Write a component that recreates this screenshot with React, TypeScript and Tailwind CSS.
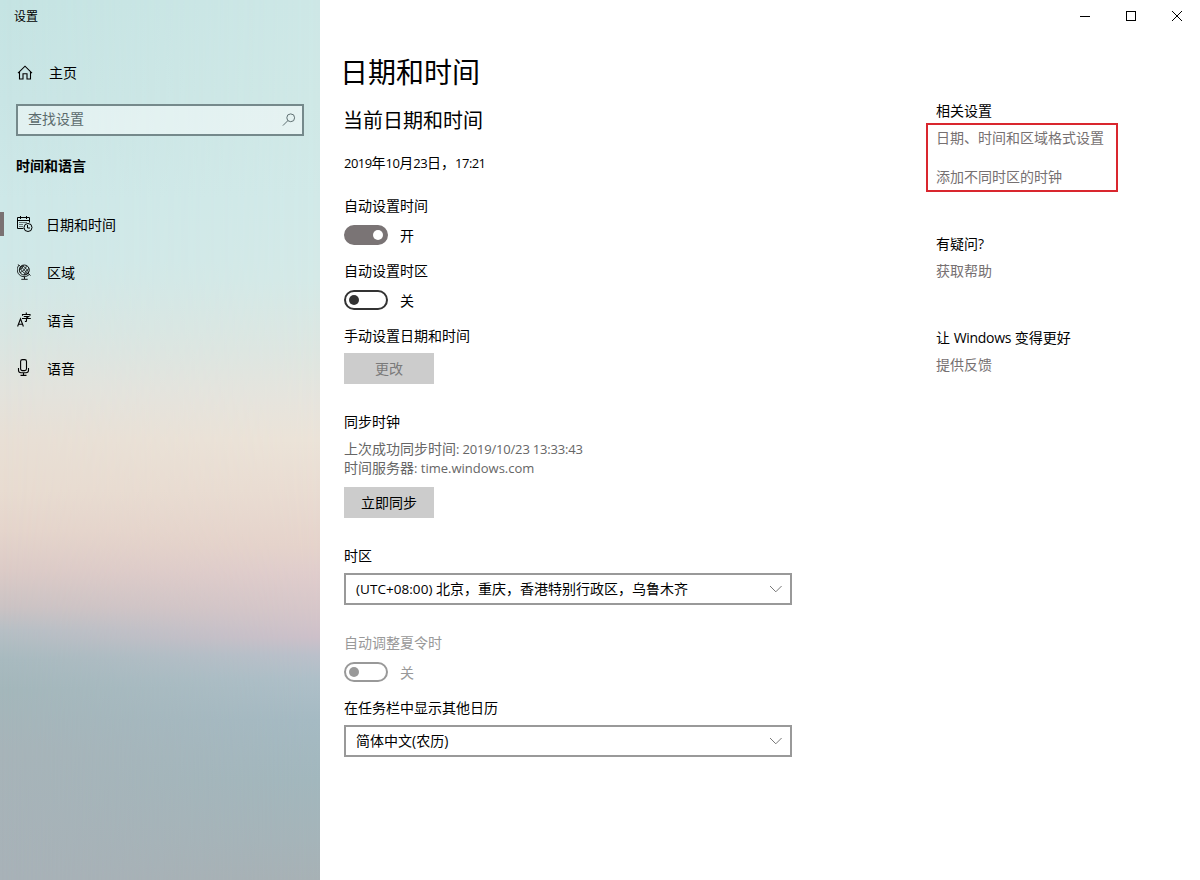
import type { ReactNode } from "react";

const FONT = "font-['Open_Sans','Noto_Sans_CJK_SC',sans-serif]";

function HomeIcon() {
  return (
    <svg width="16" height="16" viewBox="0 0 16 16" fill="none" stroke="#000" strokeWidth="1.1">
      <path d="M1 8.2 8 1.2l7 7M2.5 6.8v7.2h3.5V8.8h4v5.2h3.5V6.8" />
    </svg>
  );
}

function SearchIcon() {
  return (
    <svg width="14" height="14" viewBox="0 0 14 14" fill="none" stroke="#5f7072" strokeWidth="1">
      <circle cx="8.7" cy="4.8" r="3.9" />
      <path d="M5.9 7.6.9 12.6" />
    </svg>
  );
}

function CalendarIcon() {
  return (
    <svg width="16" height="16" viewBox="0 0 16 16" fill="none" stroke="#000" strokeWidth="1">
      <path d="M6.5 12.5h-6v-11h12v5M.5 4.5h12M3.5 0v3M9.5 0v3" />
      <path d="M2.5 6.5h8M2.5 8.5h4M2.5 10.5h3" strokeDasharray="1 1" />
      <circle cx="11" cy="11.5" r="4" />
      <path d="M10.5 9v3h2.5" />
    </svg>
  );
}

function GlobeIcon() {
  return (
    <svg width="16" height="16" viewBox="0 0 16 16" fill="none" stroke="#000" strokeWidth=".9">
      <circle cx="7.3" cy="6" r="5" />
      <g strokeWidth=".75">
        <ellipse cx="7.3" cy="6" rx="2.3" ry="5" transform="rotate(-42 7.3 6)" />
        <path d="M3.9 2.4 10.7 9.6M6.200 1.200c-.4 2.400-1.400 3.700-3.800 4.600M9.600 1.800C8.600 4.800 6.400 7.200 3 8.600M12.100 4.500C9.600 6 8.300 7.400 7.500 11" />
      </g>
      <path d="M2.300 1C-.6 3.700-.4 8 2.300 10.700s7 2.700 9.900-.2M1.200.4l1.800 1.900M11.200 9.400l2.300 2.100M7.500 12.700v2.300M4.300 15.300h6.400" />
    </svg>
  );
}

function LanguageIcon() {
  return (
    <svg width="16" height="16" viewBox="0 0 16 16" fill="none" stroke="#000" strokeWidth="1.1">
      <path d="M.6 14.500 3.500 6.800l2.900 7.700M1.600 12.200h3.800" />
      <path d="M5.500 3.800V2.500h7.500v1.300M9.300.6v1.900M6.800 4.500h4.700L9.500 6v2.800c0 .6-.4.700-1.600.6M5 6.500h8.800" />
    </svg>
  );
}

function MicIcon() {
  return (
    <svg width="16" height="17" viewBox="0 0 16 17" fill="none" stroke="#000" strokeWidth="1.1">
      <rect x="3.6" y=".6" width="5.900" height="11" rx="1.800" />
      <path d="M1.500 9v2.200c0 1.600 1 2.500 2.500 2.500h5c1.500 0 2.500-.9 2.500-2.500V9M6.500 13.700v2.700M3.500 16.400h6" />
    </svg>
  );
}

function Chevron() {
  return (
    <svg width="14" height="8" viewBox="0 0 14 8" fill="none" stroke="#777" strokeWidth="1">
      <path d="M1 1 6.800 6.800 12.600 1" />
    </svg>
  );
}

function NavItem({ icon, label, active = false }: { icon: ReactNode; label: string; active?: boolean }) {
  return (
    <div className="flex h-12 items-center">
      <div className={active ? "h-6 w-1 bg-[#7a7172]" : "h-6 w-1"} />
      <div className="ml-[13px] flex w-[30px] pb-px">{icon}</div>
      <span className={active ? "-ml-px pt-0.5" : "pt-0.5"}>{label}</span>
    </div>
  );
}

function Toggle({ state }: { state: "on" | "off" | "disabled" }) {
  const track = {
    on: "justify-end border-[#7a7475] bg-[#7a7475] pr-[3px]",
    off: "justify-start border-[#333] pl-[3px]",
    disabled: "justify-start border-[#999] pl-[3px]",
  }[state];
  const knob = { on: "bg-white", off: "bg-[#333]", disabled: "bg-[#999]" }[state];
  return (
    <div className="flex h-5 items-center">
      <div className={`flex h-5 w-11 items-center rounded-full border-2 ${track}`}>
        <div className={`size-2.5 rounded-full ${knob}`} />
      </div>
      <span className={`ml-3 pt-0.5 ${state === "disabled" ? "text-[#999]" : ""}`}>{state === "on" ? "开" : "关"}</span>
    </div>
  );
}

function Select({ children }: { children: ReactNode }) {
  return (
    <div className="mt-[7px] flex h-8 w-[448px] items-center justify-between border-2 border-[#999] pr-[7px] pl-2.5">
      <span>{children}</span>
      <Chevron />
    </div>
  );
}

function Digits({ children }: { children: ReactNode }) {
  return <span className="text-[13px] leading-none tracking-[-0.55px]">{children}</span>;
}

export default function App() {
  return (
    <div className={`flex h-[880px] w-[1200px] overflow-hidden bg-white text-sm leading-5 whitespace-nowrap text-black ${FONT}`}>
      <aside className="relative isolate w-80 shrink-0 bg-[linear-gradient(180deg,#c5e4e3_0px,#c9e5e5_100px,#cee8e8_200px,#d0e8e8_260px,#d8e6e3_330px,#e3e3dd_390px,#e8dfd5_440px,#e8dcd1_490px,#e5d5cc_530px,#dccbc7_570px,#cbc3c4_607px,#b7bfc5_630px,#a8babf_660px,#a4b7bb_690px,#a7b4b9_750px,#a8b2b8_880px)]">
        <div className="absolute inset-0 -z-10 bg-[linear-gradient(180deg,#cde7e6_0px,#cfe8e6_100px,#d1e9e8_200px,#d4e9e7_280px,#dde6e1_350px,#e6e4dd_400px,#ebe3d8_440px,#e9dcd2_490px,#e5d3cb_545px,#e0cdcc_572px,#d6c6c9_610px,#cdc0c9_637px,#bbc0ca_655px,#aebfc8_680px,#a5bac3_720px,#a2b7bd_780px,#a5b4b9_840px,#a7b1b5_880px)] [mask-image:linear-gradient(90deg,transparent,black)]" />
        <div className="pt-[7px] pl-3.5 text-xs leading-5">设置</div>
        <div className="mt-9 flex h-5 items-center pl-[17px]">
          <HomeIcon />
          <span className="ml-4">主页</span>
        </div>
        <div className="mt-[21px] ml-4 flex h-8 w-72 items-center justify-between border-2 border-[#75898b] bg-white/45 pr-1.5 pl-2.5">
          <span className="pb-0.5 text-[#5b6b6d]">查找设置</span>
          <SearchIcon />
        </div>
        <div className="mt-5 pl-4 font-bold">时间和语言</div>
        <nav className="mt-6">
          <NavItem active icon={<CalendarIcon />} label="日期和时间" />
          <NavItem icon={<GlobeIcon />} label="区域" />
          <NavItem icon={<LanguageIcon />} label="语言" />
          <NavItem icon={<MicIcon />} label="语音" />
        </nav>
      </aside>

      <main className="w-[606px] shrink-0 pt-[54px] pl-6">
        <h1 className="-ml-1 text-[28px] leading-9">日期和时间</h1>
        <h2 className="mt-[17px] -ml-px text-xl leading-7">当前日期和时间</h2>
        <p className="mt-[18px] h-5">
          <Digits>2019</Digits>年<Digits>10</Digits>月<Digits>23</Digits>日，<Digits>17:21</Digits>
        </p>

        <div className="mt-[23px] mb-[9px]">自动设置时间</div>
        <Toggle state="on" />
        <div className="mt-4 mb-[9px]">自动设置时区</div>
        <Toggle state="off" />
        <div className="mt-4">手动设置日期和时间</div>
        <button className="mt-[7px] flex h-[31px] w-[90px] items-center justify-center bg-[#ccc] text-[#7a7a7a]">更改</button>

        <div className="mt-7">同步时钟</div>
        <div className="mt-[7px] leading-[19px] text-[#666]">
          <p className="h-[19px]">上次成功同步时间<span className="text-[13px] leading-none tracking-[-0.18px]">: 2019/10/23 13:33:43</span></p>
          <p className="h-[19px]">时间服务器<span className="text-[13px] leading-none">: time.windows.com</span></p>
        </div>
        <button className="mt-2.5 flex h-[31px] w-[90px] items-center justify-center bg-[#ccc]">立即同步</button>

        <div className="mt-7">时区</div>
        <Select>
          <span className="text-[13.5px] leading-none tracking-[0.05px]">(UTC+08:00) </span>北京，重庆，香港特别行政区，乌鲁木齐
        </Select>

        <div className="mt-7 mb-[9px] text-[#999]">自动调整夏令时</div>
        <Toggle state="disabled" />
        <div className="mt-4">在任务栏中显示其他日历</div>
        <Select>简体中文(农历)</Select>
      </main>

      <div className="flex flex-1 flex-col">
        <div className="flex h-8 items-center justify-end gap-9 pr-[18px]">
          <svg width="10" height="10" viewBox="0 0 10 10" stroke="#000"><path d="M0 5.5h10" /></svg>
          <svg width="10" height="10" viewBox="0 0 10 10" fill="none" stroke="#000"><rect x=".5" y=".5" width="9" height="9" /></svg>
          <svg width="10" height="10" viewBox="0 0 10 10" stroke="#000"><path d="m0 0 10 10M10 0 0 10" /></svg>
        </div>
        <section className="pt-[69px]">
          <div className="pl-2.5">相关设置</div>
          <div className="mt-0.5 h-[69px] w-48 border-2 border-[#d9262e] pt-[3px] pl-2 text-[#767071]">
            <div>日期、时间和区域格式设置</div>
            <div className="mt-[19px]">添加不同时区的时钟</div>
          </div>
        </section>
        <section className="mt-[42px] pl-2.5">
          <div>有疑问?</div>
          <div className="mt-[7px] text-[#767071]">获取帮助</div>
        </section>
        <section className="mt-[47px] pl-2.5">
          <div>让 <span className="tracking-[-0.3px]">Windows</span> 变得更好</div>
          <div className="mt-[7px] text-[#767071]">提供反馈</div>
        </section>
      </div>
    </div>
  );
}
